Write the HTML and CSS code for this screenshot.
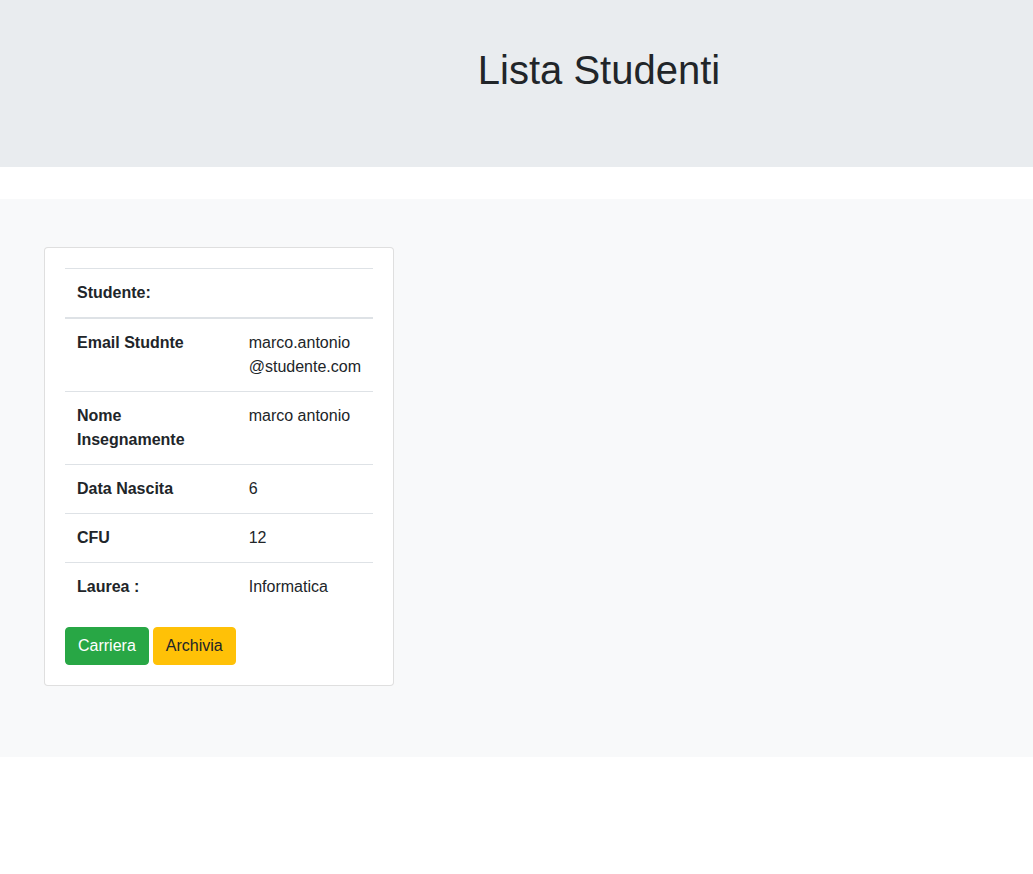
FILE: index.html
```html
<!DOCTYPE html>
<html lang="it">
<head>
<meta charset="utf-8">
<title>Lista Studenti</title>
<link rel="stylesheet" href="styles.css">
</head>
<body>
<header class="jumbotron">
  <h1 class="title">Lista Studenti</h1>
</header>
<main class="section">
  <div class="card">
    <div class="card-body">
      <table class="table">
        <thead>
          <tr><th class="col-label">Studente:</th><th></th></tr>
        </thead>
        <tbody>
          <tr><th>Email Studnte</th><td>marco.antonio<br>@studente.com</td></tr>
          <tr><th>Nome<br>Insegnamente</th><td>marco antonio</td></tr>
          <tr><th>Data Nascita</th><td>6</td></tr>
          <tr><th>CFU</th><td>12</td></tr>
          <tr><th>Laurea :</th><td>Informatica</td></tr>
        </tbody>
      </table>
      <div class="actions">
        <button class="btn btn-success">Carriera</button>
        <button class="btn btn-warning">Archivia</button>
      </div>
    </div>
  </div>
</main>
</body>
</html>
```

FILE: styles.css
```css
* { box-sizing: border-box; }
html, body {
  margin: 0;
  padding: 0;
}
body {
  font-family: "Liberation Sans", Arial, Helvetica, sans-serif;
  font-size: 16px;
  line-height: 1.5;
  color: #212529;
  background: #fff;
  height: 874px;
}
.jumbotron {
  background: #e9ecef;
  height: 167px;
  padding: 46px 0 0 165px;
  margin: 0 0 32px 0;
}
.title {
  margin: 0;
  font-size: 40px;
  line-height: 48px;
  font-weight: 500;
  text-align: center;
}
.section {
  background: #f8f9fa;
  height: 558px;
  padding: 48px 0 0 44px;
}
.card {
  width: 350px;
  background: #fff;
  border: 1px solid rgba(0, 0, 0, .125);
  border-radius: 4px;
}
.card-body {
  padding: 20px;
}
.table {
  width: 100%;
  border-collapse: collapse;
  margin-bottom: 16px;
}
.table th, .table td {
  padding: 12px;
  text-align: left;
  vertical-align: top;
  border-top: 1px solid #dee2e6;
}
.table th { font-weight: bold; }
.table td { font-weight: normal; }
.table thead th {
  border-bottom: 2px solid #dee2e6;
}
.table tbody tr:first-child th,
.table tbody tr:first-child td {
  border-top: 0;
}
.col-label { width: 172px; }
.actions {
  display: flex;
  gap: 4px;
}
.btn {
  font-family: inherit;
  font-size: 16px;
  line-height: 24px;
  padding: 6px 12px;
  border: 1px solid transparent;
  border-radius: 4px;
  cursor: pointer;
}
.btn-success {
  background: #28a745;
  border-color: #28a745;
  color: #fff;
}
.btn-warning {
  background: #ffc107;
  border-color: #ffc107;
  color: #212529;
}
```
